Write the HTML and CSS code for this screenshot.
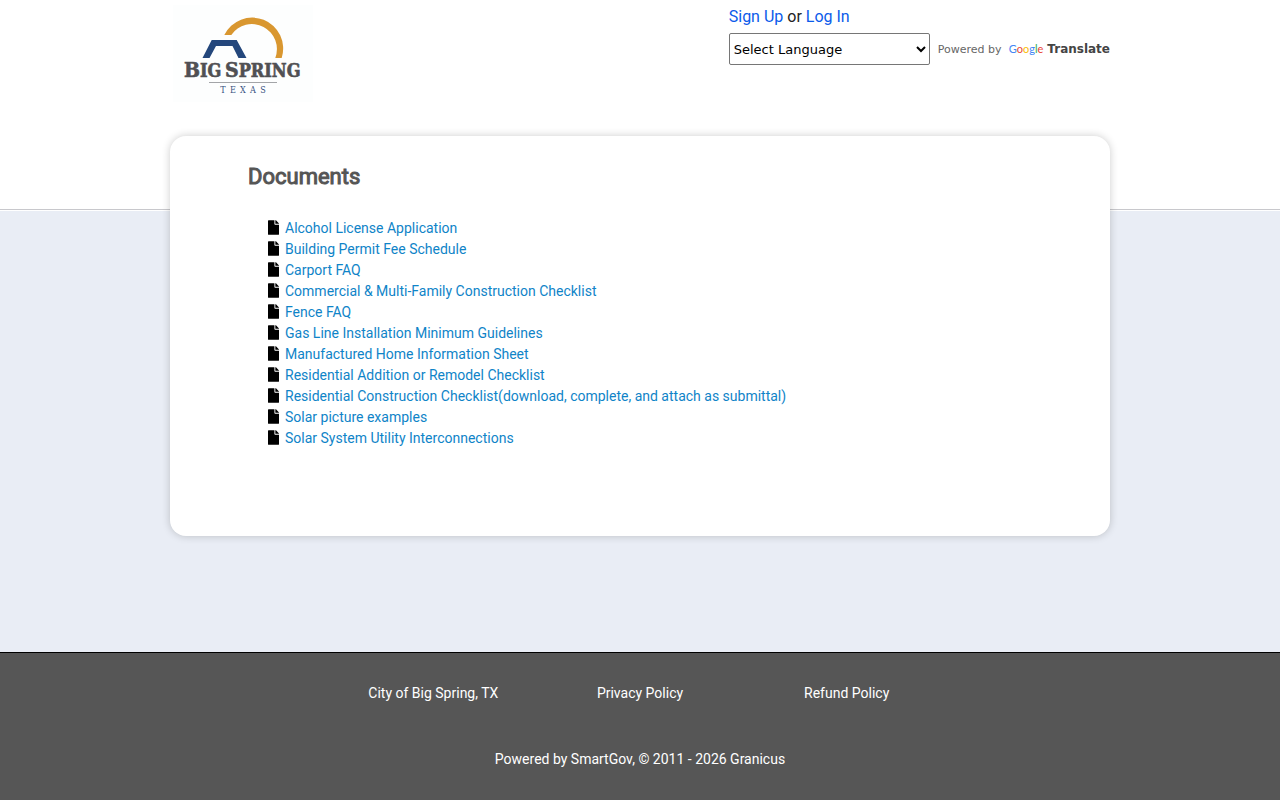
FILE: index.html
```html
<!DOCTYPE html>
<html lang="en">
<head>
<meta charset="utf-8">
<meta name="viewport" content="width=device-width, initial-scale=1">
<title>Documents</title>
<link rel="stylesheet" href="styles.css">
</head>
<body>
<svg class="sprite" aria-hidden="true">
  <symbol id="file" viewBox="0 0 384 512"><path d="M224 136V0H24C10.700 0 0 10.700 0 24v464c0 13.300 10.700 24 24 24h336c13.300 0 24-10.700 24-24V160H248c-13.200 0-24-10.800-24-24zm160-14.100v6.100H256V0h6.100c6.400 0 12.500 2.500 17 7l97.900 98c4.500 4.500 7 10.600 7 16.900z"/></symbol>
</svg>
<header class="band">
  <div class="wrap top">
    <svg class="logo" viewBox="170 0 146 104" role="img" aria-label="Big Spring Texas">
      <rect x="173" y="5" width="140" height="97" fill="#fdfefe"/>
      <path d="M224.300 35A31 31 0 0 1 281.700 58H275.300A25 25 0 0 0 231.300 35Z" fill="#d99730"/>
      <path d="M202.500 58L211.700 40H236.700L246.500 58H238.500L232.500 46H216L209.500 58Z" fill="#24477c"/>
      <g class="logo-name" fill="#505053">
        <text x="184" y="77"><tspan class="cap">B</tspan>IG</text>
        <text x="225" y="77"><tspan class="cap">S</tspan>PRING</text>
      </g>
      <path d="M209 82.500H277" stroke="#a3a5a8"/>
      <g class="logo-state" fill="#35507f" text-anchor="middle">
        <text x="223" y="93">T</text><text x="233" y="93">E</text><text x="243" y="93">X</text><text x="253" y="93">A</text><text x="263" y="93">S</text>
      </g>
    </svg>
    <div class="tools">
      <div class="account"><a href="#">Sign Up</a> or <a href="#">Log In</a></div>
      <div class="translate">
        <select class="language" aria-label="Select Language"><option>Select Language</option></select>
        <span class="powered">Powered by</span>
        <span class="google"><span class="g-blue">G</span><span class="g-red">o</span><span class="g-yellow">o</span><span class="g-blue">g</span><span class="g-green">l</span><span class="g-red">e</span></span>
        <b class="brand">Translate</b>
      </div>
    </div>
  </div>
</header>
<main class="wrap card">
  <h1 class="title">Documents</h1>
  <ul class="docs">
    <li><svg class="icon" aria-hidden="true"><use href="#file"/></svg><a href="#">Alcohol License Application</a></li>
    <li><svg class="icon" aria-hidden="true"><use href="#file"/></svg><a href="#">Building Permit Fee Schedule</a></li>
    <li><svg class="icon" aria-hidden="true"><use href="#file"/></svg><a href="#">Carport FAQ</a></li>
    <li><svg class="icon" aria-hidden="true"><use href="#file"/></svg><a href="#">Commercial &amp; Multi-Family Construction Checklist</a></li>
    <li><svg class="icon" aria-hidden="true"><use href="#file"/></svg><a href="#">Fence FAQ</a></li>
    <li><svg class="icon" aria-hidden="true"><use href="#file"/></svg><a href="#">Gas Line Installation Minimum Guidelines</a></li>
    <li><svg class="icon" aria-hidden="true"><use href="#file"/></svg><a href="#">Manufactured Home Information Sheet</a></li>
    <li><svg class="icon" aria-hidden="true"><use href="#file"/></svg><a href="#">Residential Addition or Remodel Checklist</a></li>
    <li><svg class="icon" aria-hidden="true"><use href="#file"/></svg><a href="#">Residential Construction Checklist(download, complete, and attach as submittal)</a></li>
    <li><svg class="icon" aria-hidden="true"><use href="#file"/></svg><a href="#">Solar picture examples</a></li>
    <li><svg class="icon" aria-hidden="true"><use href="#file"/></svg><a href="#">Solar System Utility Interconnections</a></li>
  </ul>
</main>
<footer class="footer">
  <nav class="footer-links">
    <a href="#">City of Big Spring, TX</a>
    <a href="#">Privacy Policy</a>
    <a href="#">Refund Policy</a>
  </nav>
  <div class="credit">Powered by SmartGov, © 2011 - 2026 Granicus</div>
</footer>
</body>
</html>
```

FILE: styles.css
```css
* { box-sizing: border-box; }
body {
  margin: 0;
  min-height: 100vh;
  display: flex;
  flex-direction: column;
  background: #e9edf5;
  font: 14px/21px Roboto, "Liberation Sans", sans-serif;
  color: #222;
}
a { text-decoration: none; }
.sprite { display: none; }
.wrap { width: 100%; max-width: 940px; margin: 0 auto; }
.band {
  min-height: 210px;
  background: #fff;
  border-bottom: 1px solid #c8c8cc;
  box-shadow: 0 1px 0 #fff;
}
.top { display: flex; justify-content: space-between; align-items: flex-start; }
.logo { width: 146px; height: 104px; }
.logo-name {
  font: bold 18px "DejaVu Serif Condensed", "DejaVu Serif", serif;
  stroke: #505053;
  stroke-width: 0.6px;
}
.cap { font-size: 21px; }
.logo-state { font: 9px "DejaVu Serif Condensed", "DejaVu Serif", serif; }
.tools { padding-top: 5px; }
.account { font-size: 16px; line-height: 24px; }
.account a { color: #0b5bea; }
.translate {
  display: flex;
  align-items: center;
  margin-top: 4px;
  font-family: "DejaVu Sans", sans-serif;
}
.language {
  width: 201px;
  height: 32px;
  margin-right: 8px;
  border: 1px solid #767676;
  border-radius: 2px;
  background: #fff;
  color: #000;
  font: 13px "DejaVu Sans", sans-serif;
}
.powered { width: 66px; margin-right: 5px; font-size: 11px; color: #666; }
.google { margin-right: 4px; font: 11px/16px Lato, sans-serif; }
.g-blue { color: #4285f4; }
.g-red { color: #ea4335; }
.g-yellow { color: #fbbc05; }
.g-green { color: #34a853; }
.brand { font-size: 12px; color: #444; }
.card {
  min-height: 400px;
  margin-top: -74px;
  margin-bottom: 116px;
  padding: 27px 78px;
  background: #fff;
  border-radius: 16px;
  box-shadow: 0 0 8px rgba(0, 0, 0, 0.2);
}
.title {
  margin: 0 0 27px;
  font-size: 22px;
  line-height: 28px;
  color: #555;
  font-weight: 400;
  -webkit-text-stroke: 1px #555;
}
.docs { margin: 0; padding: 0 0 0 20px; list-style: none; }
.docs li { display: flex; align-items: center; gap: 6px; }
.docs a { color: #0f84c8; }
.icon { width: 11px; height: 15px; margin-bottom: 2px; flex: none; }
.footer {
  flex: 1;
  padding: 30px 20px;
  border-top: 1px solid #000;
  background: #565656;
  color: #fff;
  text-align: center;
}
.footer-links {
  display: grid;
  grid-template-columns: repeat(3, 1fr);
  max-width: 620px;
  margin: 0 auto 45px;
}
.footer a { color: #fff; }
```
